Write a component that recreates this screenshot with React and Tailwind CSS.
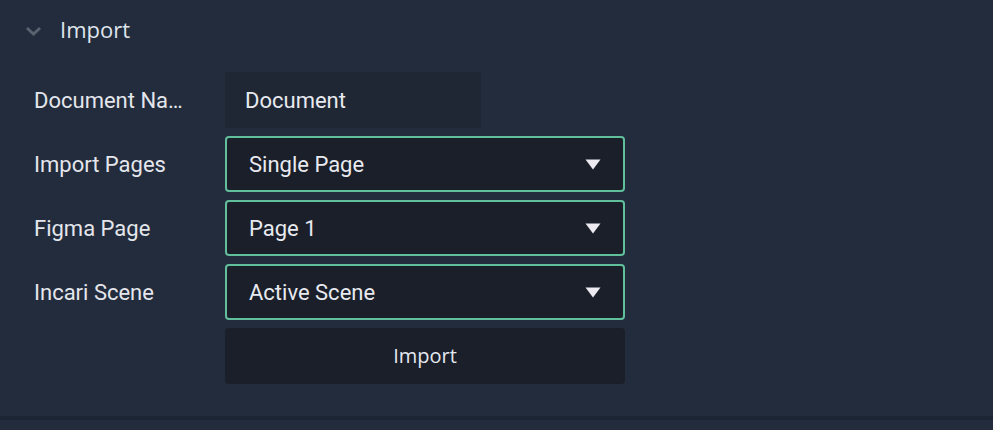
import React from "react";

const Arrow = () => (
  <svg width="16" height="11" viewBox="0 0 16 11" className="shrink-0">
    <polygon points="0.5,0.5 15.5,0.5 8,10.5" fill="#eceaf0" />
  </svg>
);

function Select({ value }) {
  return (
    <div className="w-[400px] h-[56px] shrink-0 rounded-[4px] border-2 border-[#62bf9c] bg-[#1a1f29] flex items-center justify-between pl-[22px] pr-[22px]">
      <span className="text-[22px] text-[#e8eaf0]" style={{ fontFamily: "Roboto, sans-serif" }}>{value}</span>
      <Arrow />
    </div>
  );
}

function Row({ label, children }) {
  return (
    <div className="flex items-center h-[56px]">
      <div className="w-[225px] shrink-0 pl-[34px]">
        <div className="text-[22px] text-[#e4e6ec] whitespace-nowrap" style={{ fontFamily: "Roboto, sans-serif" }}>{label}</div>
      </div>
      {children}
    </div>
  );
}

export default function App() {
  return (
    <div className="w-[993px] h-[430px] bg-[#222c3c] flex flex-col overflow-hidden">
      <div className="h-[416px] flex flex-col">
        <div className="flex items-center h-[58px] pl-[25px]">
          <svg width="17" height="10" viewBox="0 0 17 10" className="mr-[18px] mt-[4px]">
            <polyline points="2,2 8.5,8 15,2" fill="none" stroke="#59626f" strokeWidth="3" />
          </svg>
          <span className="text-[22px] text-[#dfe4ec]" style={{ fontFamily: "'Open Sans', sans-serif" }}>Import</span>
        </div>
        <div className="flex flex-col gap-[8px] mt-[14px]">
          <Row label="Document Na…">
            <div className="w-[256px] h-[56px] shrink-0 bg-[#1f2634] flex items-center pl-[20px]">
              <span className="text-[22px] text-[#e8eaf0]" style={{ fontFamily: "Roboto, sans-serif" }}>Document</span>
            </div>
          </Row>
          <Row label="Import Pages"><Select value="Single Page" /></Row>
          <Row label="Figma Page"><Select value="Page 1" /></Row>
          <Row label="Incari Scene"><Select value="Active Scene" /></Row>
          <Row label="">
            <div className="w-[400px] h-[56px] shrink-0 rounded-[4px] bg-[#1a1f29] flex items-center justify-center">
              <span className="text-[20px] text-[#e4e8f0]" style={{ fontFamily: "'Open Sans', sans-serif" }}>Import</span>
            </div>
          </Row>
        </div>
      </div>
      <div className="h-[4px] bg-[#1c2533]" />
    </div>
  );
}
